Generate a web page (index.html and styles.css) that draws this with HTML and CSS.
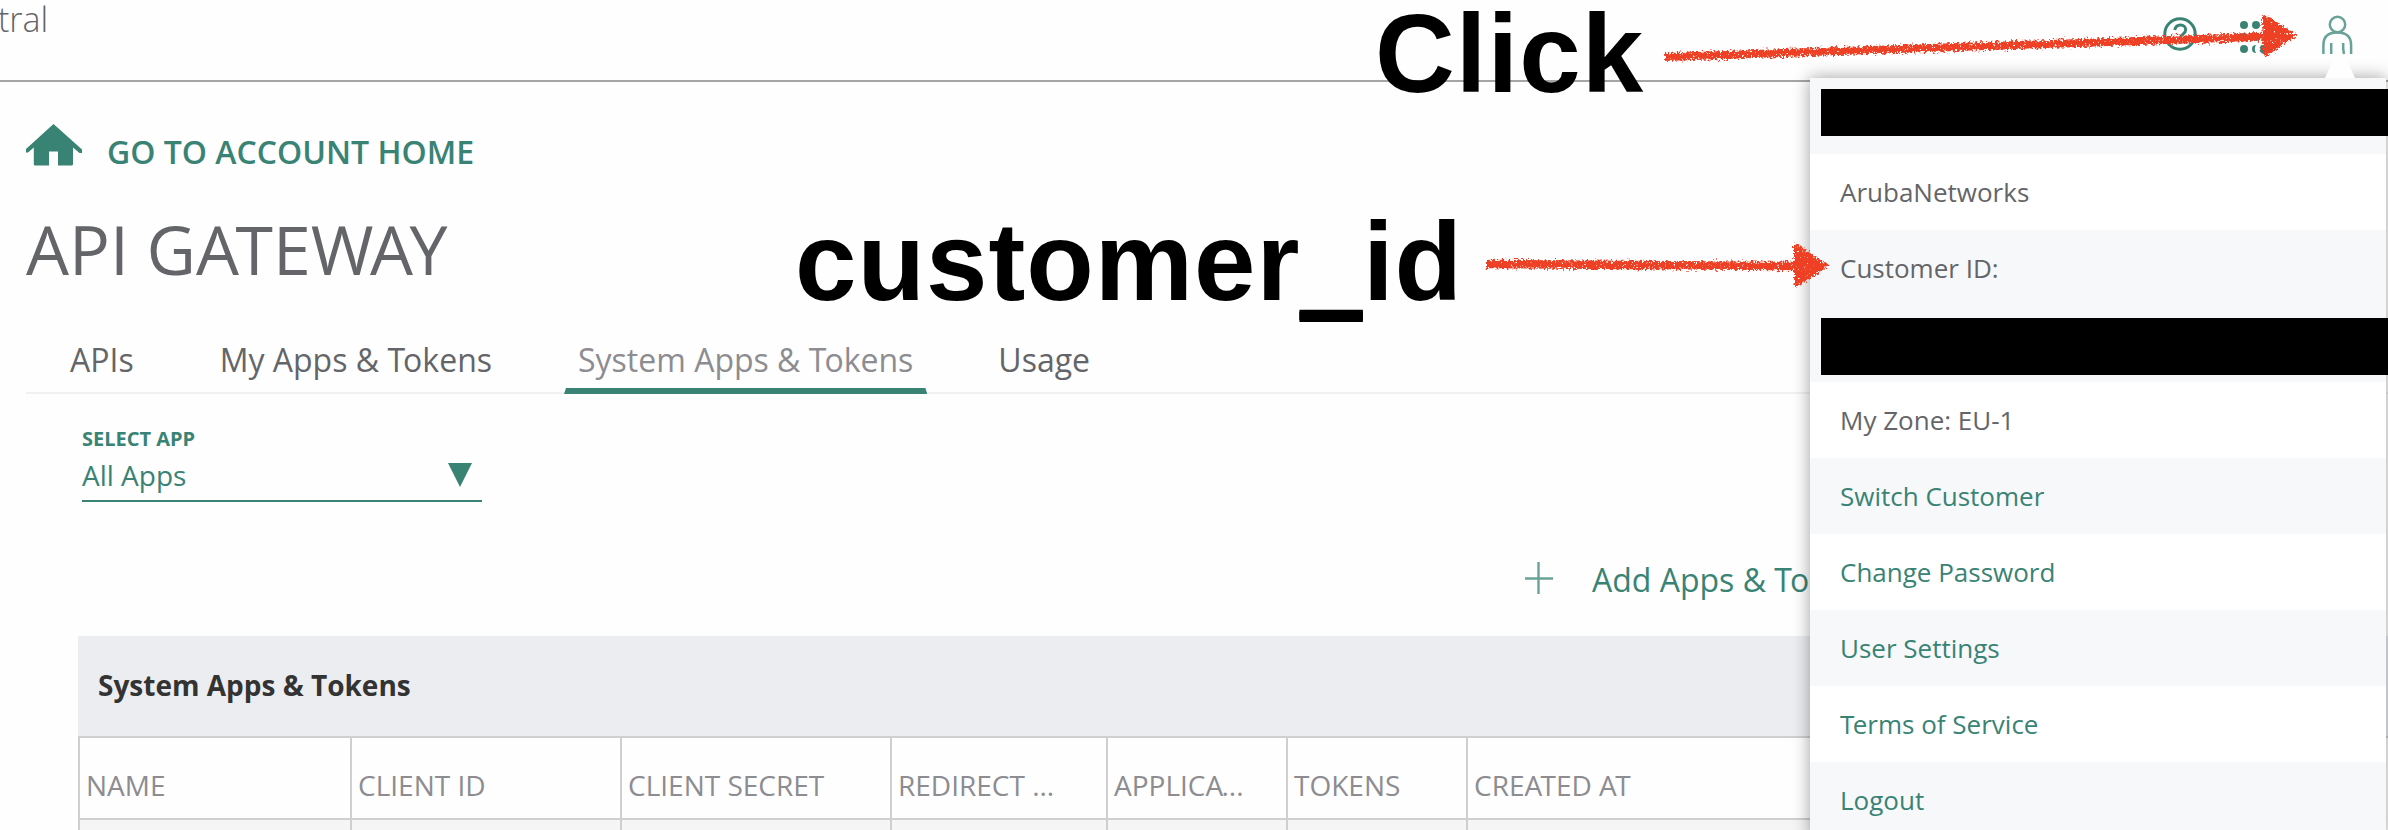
FILE: index.html
```html
<!DOCTYPE html>
<html lang="en">
<head>
<meta charset="utf-8">
<title>API Gateway</title>
<link rel="stylesheet" href="styles.css">
</head>
<body>
<header class="topbar">
  <span class="brand">tral</span>
  <nav class="tools">
    <svg class="tool-help" width="34" height="36" viewBox="0 0 34 36"><g fill="none" stroke="#398375" stroke-width="3"><circle cx="17" cy="18" r="15.2"/><path d="M11.700 14c.8-3.600 3.100-5 5.700-5 3.100 0 5.300 2 5.300 4.800 0 4.400-5.400 4.200-5.400 8.600v1.200M17.300 25.400v2.400"/></g></svg>
    <svg class="tool-apps" width="34" height="36" viewBox="0 0 34 36"><g fill="#398375"><circle cx="5" cy="6" r="4"/><circle cx="17" cy="6" r="4"/><circle cx="5" cy="18" r="4"/><circle cx="17" cy="18" r="4"/><circle cx="29" cy="18" r="4"/><circle cx="5" cy="30" r="4"/><path d="M17 26a4 4 0 0 0 0 8q-2.500-4 0-8zM22.500 26l-2 2.500 1 1.500-1 2 2.500 2.500h5l7-3v-5z"/></g></svg>
    <svg class="tool-user" width="32" height="40" viewBox="0 0 32 40"><g fill="none" stroke="#69a297" stroke-width="2.500"><circle cx="16.500" cy="9.500" r="7.700"/><path d="M2.400 39V30Q2.400 17.500 16.200 17.500T30.100 30V39M10.200 28v11M22.200 28v6l.8 5"/></g></svg>
  </nav>
</header>

<main class="page">
  <a class="home">
    <svg width="56" height="42" viewBox="0 0 56 42"><path fill="#398375" d="M27.500 0 56 25.500V29h-2.500L47 23.500V40q0 1.500-1.500 1.500H32V27.500h-9v14H9Q7.800 41.500 7.800 40V23.500L2 28.500H0V25z"/></svg>
    <span>GO TO ACCOUNT HOME</span>
  </a>
  <h1 class="title">API G<span class="k">A</span>TE<span class="k">WA</span>Y</h1>
  <nav class="tabs">
    <span class="tab">APIs</span>
    <span class="tab">My Apps &amp; <span class="k">T</span>okens</span>
    <span class="tab tab-on">System Apps &amp; <span class="k">T</span>okens</span>
    <span class="tab">Usage</span>
  </nav>
  <section class="content">
    <div class="select">
      <div class="select-label">SELECT APP</div>
      <div class="select-value"><span>All Apps</span><svg width="24" height="24" viewBox="0 0 24 24"><path fill="#398375" d="M0 0h24L12 24z"/></svg></div>
    </div>
    <div class="actions">
      <svg width="30" height="34" viewBox="0 0 30 34"><path fill="none" stroke="#69a297" stroke-width="2.400" d="M14.500 1v32M1 17.500h28"/></svg>
      <span>Add Apps &amp; <span class="k">T</span>okens</span>
    </div>
    <div class="grid-title">System Apps &amp; Tokens</div>
    <div class="grid">
      <div class="cell">NAME</div><div class="cell">CLIENT ID</div><div class="cell">CLIENT SECRET</div><div class="cell">REDIRECT ...</div><div class="cell">APPLIC<span class="k">A</span>...</div><div class="cell">TOKENS</div><div class="cell">CRE<span class="k">A</span>TED <span class="k">A</span>T</div>
      <div class="cell body"></div><div class="cell body"></div><div class="cell body"></div><div class="cell body"></div><div class="cell body"></div><div class="cell body"></div><div class="cell body"></div>
    </div>
  </section>
</main>

<aside class="menu">
  <i class="caret"></i>
  <div class="item"><b class="redact first"></b></div>
  <div class="item">ArubaNetworks</div>
  <div class="item tall">Customer ID:<b class="redact second"></b></div>
  <div class="item">My Zone: EU-1</div>
  <div class="item link">Switch Customer</div>
  <div class="item link">Change Password</div>
  <div class="item link">User Settings</div>
  <div class="item link"><span class="k">T</span>erms of Service</div>
  <div class="item link">Logout</div>
</aside>

<div class="note note-click">Click</div>
<div class="note note-id">customer<span class="low">_</span>id</div>
<svg class="arrows" width="2388" height="830" viewBox="0 0 2388 830">
  <defs>
    <filter id="chalk" color-interpolation-filters="sRGB" filterUnits="userSpaceOnUse" x="1400" y="0" width="988" height="320">
      <feTurbulence type="fractalNoise" baseFrequency="0.45" numOctaves="2" seed="4" result="n"/>
      <feDisplacementMap in="SourceGraphic" in2="n" scale="8" xChannelSelector="R" yChannelSelector="G" result="d"/>
      <feColorMatrix in="n" type="matrix" values="0 0 0 0 0  0 0 0 0 0  0 0 0 0 0  0 0 -9 0 7.100" result="m"/>
      <feComposite in="d" in2="m" operator="in"/>
    </filter>
  </defs>
  <g filter="url(#chalk)" fill="#ee4024" stroke="#ee4024" stroke-linejoin="round">
    <path stroke-width="8" d="M1665 57 2270 36.500"/>
    <path stroke-width="4" d="M2264 17 2294 35 2265 54.500z"/>
    <path stroke-width="8.500" d="M1487 264 1797 266"/>
    <path stroke-width="4" d="M1796 246 1826 266 1796 284.500z"/>
  </g>
</svg>
</body>
</html>
```
FILE: styles.css
```css
* { box-sizing: border-box; }
body {
  margin: 0;
  width: 2388px;
  height: 830px;
  overflow: hidden;
  position: relative;
  background: #fefefe;
  color: #646569;
  font-family: "Open Sans", "Noto Sans", sans-serif;
}
svg { display: block; flex: none; }
.k { letter-spacing: -.06em; }

.topbar {
  height: 82px;
  border-bottom: 2px solid #a5a5a5;
  display: flex;
  justify-content: space-between;
  align-items: flex-start;
}
.brand { font-size: 34px; line-height: 46px; font-weight: 300; margin: -4px 0 0 -2px; }
.tools { display: flex; align-items: flex-start; padding-right: 35px; }
.tool-help { margin: 16px 42px 0 0; }
.tool-apps { margin: 19px 48px 0 0; }
.tool-user { margin: 15px 0 0; }

.page { padding-left: 26px; }
.home {
  display: flex;
  align-items: center;
  gap: 25px;
  padding-top: 34px;
  height: 92px;
  color: #398375;
  font-size: 32px;
  font-weight: 600;
  line-height: 44px;
}
.home span { padding-top: 14px; }
.title { margin: 29px 0 0; font-size: 68px; line-height: 92px; font-weight: 400; height: 92px; }
.title .k { letter-spacing: -.052em; }
.tabs {
  display: flex;
  height: 99px;
  padding: 43px 0 0 30px;
  border-bottom: 2px solid #f1f1f1;
  font-size: 32px;
  line-height: 44px;
}
.tab { height: 56px; padding: 0 14px; margin-right: 58px; white-space: nowrap; }
.tab-on { color: #8c8c91; position: relative; margin-right: 57px; }
.tab-on::after {
  content: "";
  position: absolute;
  left: 0;
  right: 0;
  bottom: 0;
  height: 6px;
  background: #398375;
  clip-path: polygon(2px 0, calc(100% - 2px) 0, 100% 100%, 0 100%);
}

.content { padding-left: 52px; }
.select {
  margin: 31px 0 0 4px;
  width: 400px;
  height: 77px;
  border-bottom: 2px solid #398375;
  color: #398375;
}
.select-label { font-size: 20px; font-weight: 700; line-height: 27px; }
.select-value {
  display: flex;
  justify-content: space-between;
  align-items: center;
  padding-right: 10px;
  font-size: 28px;
  line-height: 38px;
  margin-top: 4px;
}
.actions {
  margin: 59px 0 0 1446px;
  height: 75px;
  display: flex;
  gap: 38px;
  color: #398375;
  font-size: 32px;
  line-height: 38px;
}
.grid-title {
  height: 100px;
  padding-left: 20px;
  background: #ecedf1;
  color: #333;
  font-size: 28px;
  line-height: 98px;
  font-weight: 700;
}
.grid {
  display: grid;
  grid-template-columns: 272px 270px 270px 216px 180px 180px 540px;
  grid-template-rows: 82px 40px;
  border-top: 2px solid #d0cece;
}
.cell {
  border-left: 2px solid #d0cece;
  border-bottom: 2px solid #d0cece;
  padding: 28px 0 0 6px;
  color: #8c8c91;
  font-size: 28px;
  line-height: 38px;
  white-space: nowrap;
}
.body { background: #f5f5f5; }

.menu {
  position: absolute;
  left: 1810px;
  top: 78px;
  width: 576px;
  box-shadow: 0 0 16px rgba(0, 0, 0, .38);
}
.item {
  position: relative;
  height: 76px;
  padding-left: 30px;
  background: #fff;
  font-size: 26px;
  line-height: 76px;
}
.item:nth-of-type(odd) { background: #f7f8fa; }
.item.tall { height: 152px; }
.link { color: #398375; }
.redact { position: absolute; left: 11px; width: 567px; background: #000; }
.first { top: 11px; height: 47px; }
.second { top: 88px; height: 57px; }
.caret {
  position: absolute;
  left: 515px;
  top: -20px;
  width: 30px;
  height: 20px;
  background: #fefefe;
  clip-path: polygon(9px 0, 21px 0, 100% 100%, 0 100%);
}

.note {
  position: absolute;
  color: #000;
  font: 700 110.5px/126px "Liberation Sans", Arial, sans-serif;
  letter-spacing: 1px;
}
.note-click { left: 1375px; top: -9px; }
.note-id { left: 795px; top: 199px; }
.low { text-shadow: 0 2px #000, 0 4px #000, 0 6px #000, 0 8px #000; }
.arrows { position: absolute; left: 0; top: 0; }
```
